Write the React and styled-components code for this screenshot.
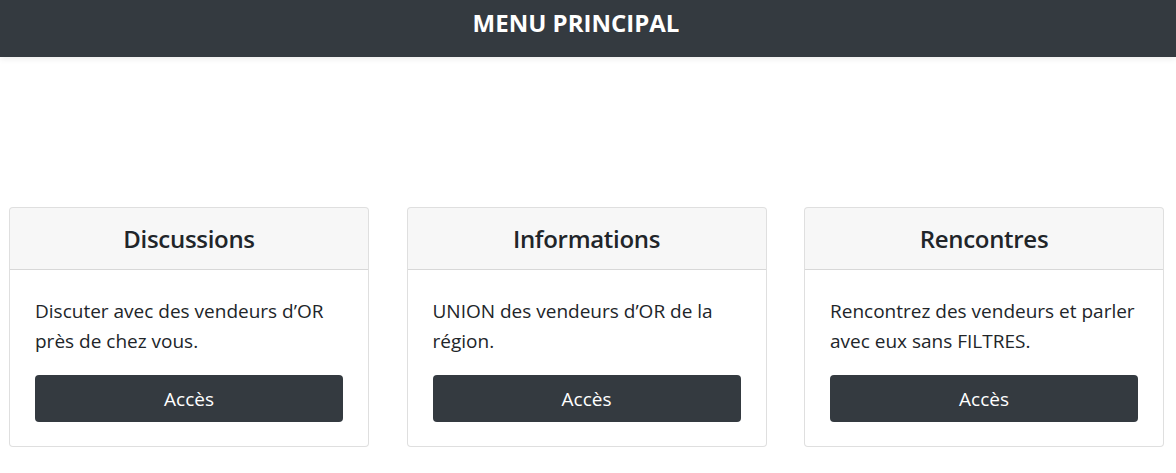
import React from "react";
import styled, { createGlobalStyle } from "styled-components";

const GlobalStyle = createGlobalStyle`
  body {
    margin: 0;
    background: #fff;
    font-family: "Open Sans", "Noto Sans", sans-serif;
    color: #212529;
  }
`;

const Navbar = styled.header`
  height: 57px;
  background-color: #343a40;
  display: flex;
  align-items: center;
  justify-content: center;
  padding-right: 24px;
  box-shadow: 0 2px 6px rgba(0, 0, 0, 0.08);
`;

const Title = styled.h1`
  margin: 0;
  color: #fff;
  font-size: 24px;
  font-weight: 700;
  letter-spacing: 0;
  transform: translateY(-6px);
`;

const Grid = styled.main`
  display: grid;
  grid-template-columns: repeat(3, 360px);
  column-gap: 37.5px;
  padding: 150px 0 0 9px;
`;

const Card = styled.section`
  border: 1px solid rgba(0, 0, 0, 0.125);
  border-radius: 4px;
  overflow: hidden;
  background: #fff;
`;

const CardHeader = styled.div`
  background-color: rgba(0, 0, 0, 0.03);
  border-bottom: 1px solid rgba(0, 0, 0, 0.125);
  padding: 16px 25px;
  text-align: center;
`;

const CardTitle = styled.h3`
  margin: 0;
  font-size: 24px;
  line-height: 29px;
  font-weight: 600;
  letter-spacing: -0.3px;
`;

const CardBody = styled.div`
  padding: 26px 25px 24px;
`;

const Text = styled.p`
  margin: 0 0 19px;
  font-size: 19px;
  line-height: 30px;
`;

const Button = styled.button`
  display: block;
  width: 100%;
  height: 47px;
  border: none;
  border-radius: 4px;
  background-color: #343a40;
  color: #fff;
  font-family: inherit;
  font-size: 19px;
  cursor: pointer;
`;

const cards = [
  {
    title: "Discussions",
    text: "Discuter avec des vendeurs d\u2019OR près de chez vous.",
  },
  {
    title: "Informations",
    text: "UNION des vendeurs d\u2019OR de la région.",
  },
  {
    title: "Rencontres",
    text: "Rencontrez des vendeurs et parler avec eux sans FILTRES.",
  },
];

const App = () => {
  return (
    <>
      <GlobalStyle />
      <Navbar>
        <Title>MENU PRINCIPAL</Title>
      </Navbar>
      <Grid>
        {cards.map((card) => (
          <Card key={card.title}>
            <CardHeader>
              <CardTitle>{card.title}</CardTitle>
            </CardHeader>
            <CardBody>
              <Text>{card.text}</Text>
              <Button>Accès</Button>
            </CardBody>
          </Card>
        ))}
      </Grid>
    </>
  );
};

export default App;
